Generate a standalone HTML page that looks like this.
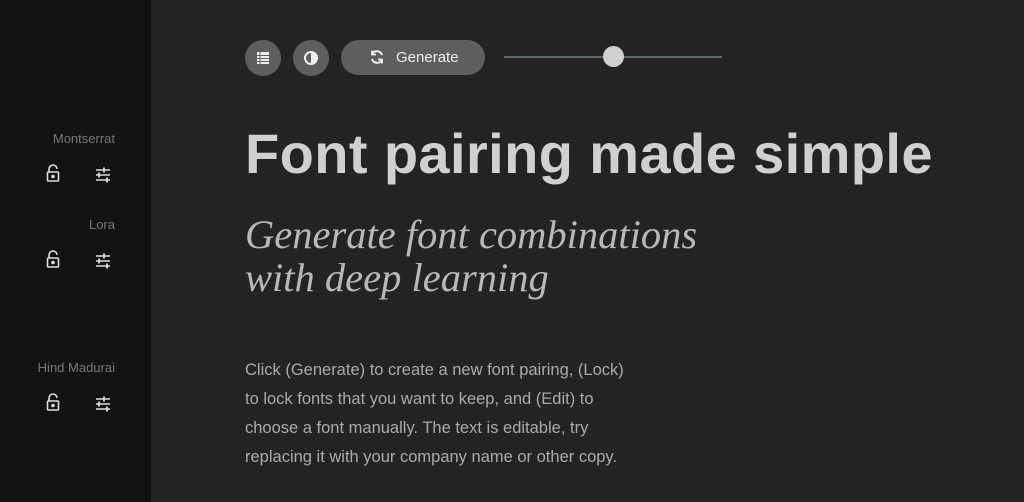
<!DOCTYPE html>
<html><head><style>
body{margin:0;width:1024px;height:502px;overflow:hidden;background:#232323;font-family:"Liberation Sans",sans-serif;position:relative}
.side{position:absolute;left:0;top:0;width:151px;height:502px;background:#121212}
.lbl{position:absolute;right:36px;font-size:13px;color:#777}
.btn{position:absolute;top:40px;width:36px;height:36px;border-radius:50%;background:#5e5e5e}
h1{position:absolute;left:245px;top:121px;margin:0;font-size:56px;font-weight:bold;color:#d0d0d0;white-space:nowrap;letter-spacing:0.4px}
.sub{position:absolute;left:245px;top:213px;font-family:"Liberation Serif",serif;font-style:italic;font-size:40.5px;line-height:43px;color:#b8b8b8;white-space:nowrap}
.p{position:absolute;left:245px;top:356px;font-size:16.5px;line-height:29px;color:#aaa;white-space:nowrap}
</style></head><body>
<div class="side">
<div class="lbl" style="top:131px">Montserrat</div>
<div class="lbl" style="top:217px">Lora</div>
<div class="lbl" style="top:360px">Hind Madurai</div>
</div>
<svg width="151" height="502" style="position:absolute;left:0;top:0" fill="none" stroke="#ddd" stroke-width="1.6">
<g id="r1">
<path d="M49 172v-3a4 4 0 0 1 8 0"/><rect x="47.5" y="172" width="11" height="9" rx="1"/><circle cx="53" cy="176.5" r="1" fill="#ddd"/>
<path d="M96 170h14M96 175h14M96 180h14" /><path d="M104 167.5v5M99 172.5v5M107 177.5v5" stroke-width="1.8"/>
</g>
<use href="#r1" y="86"/><use href="#r1" y="229"/>
</svg>
<div class="btn" style="left:245px"></div>
<svg style="position:absolute;left:256px;top:51px" width="14" height="14"><rect x="1" y="1" width="12" height="12" fill="#eee"/><path d="M1 4.5h12M1 7.5h12M1 10.5h12M4 1v12" stroke="#5e5e5e" stroke-width="1"/></svg>
<div class="btn" style="left:293px"></div>
<svg style="position:absolute;left:303px;top:50px" width="16" height="16"><circle cx="8" cy="8" r="6" fill="none" stroke="#eee" stroke-width="2"/><path d="M8 2a6 6 0 0 1 0 12z" fill="#eee"/></svg>
<div style="position:absolute;left:341px;top:40px;width:144px;height:35px;border-radius:18px;background:#5e5e5e"></div>
<svg style="position:absolute;left:369px;top:49px" width="16" height="16" fill="none" stroke="#eee" stroke-width="2"><path d="M13 6a5.5 5.5 0 0 0-10-1M3 10a5.5 5.5 0 0 0 10 1"/><path d="M3 1.5v4h4M13 14.5v-4h-4" stroke-width="1.8"/></svg>
<div style="position:absolute;left:396px;top:49px;font-size:15px;color:#eee">Generate</div>
<div style="position:absolute;left:504px;top:56px;width:218px;height:2px;background:#5f666d"></div>
<div style="position:absolute;left:603px;top:46px;width:21px;height:21px;border-radius:50%;background:#d0d0d0"></div>
<h1>Font pairing made simple</h1>
<div class="sub">Generate font combinations<br>with deep learning</div>
<div class="p">Click (Generate) to create a new font pairing, (Lock)<br>to lock fonts that you want to keep, and (Edit) to<br>choose a font manually. The text is editable, try<br>replacing it with your company name or other copy.</div>
</body></html>
